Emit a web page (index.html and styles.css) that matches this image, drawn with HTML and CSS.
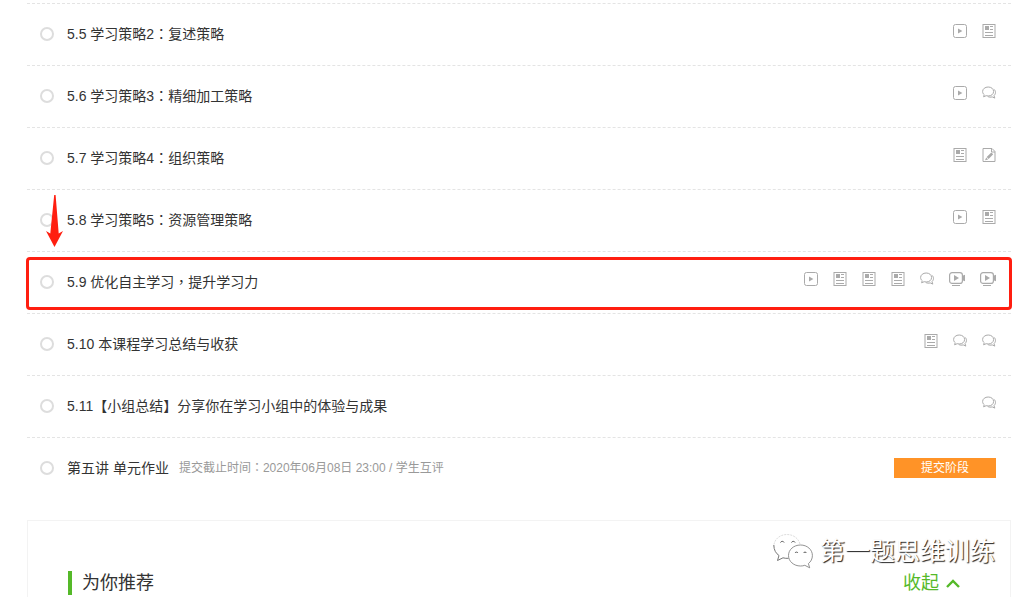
FILE: index.html
```html
<!DOCTYPE html>
<html lang="zh-CN">

<head>
    <meta charset="UTF-8">
    <meta name="viewport" content="width=device-width, initial-scale=1.0">
    <title>课程目录</title>
    <link rel="stylesheet" href="styles.css">
</head>

<body>
    <svg class="sprite" aria-hidden="true">
        <symbol id="icon-video" viewBox="0 0 14 14">
            <rect x="0.5" y="0.5" width="13" height="13" rx="2" fill="none" stroke="currentColor" />
            <path d="M5 4.4L9.4 7L5 9.6Z" fill="currentColor" />
        </symbol>
        <symbol id="icon-doc" viewBox="0 0 14 14">
            <rect x="1" y="0.5" width="12" height="13" fill="none" stroke="currentColor" />
            <rect x="3" y="2" width="4" height="4" fill="currentColor" />
            <path d="M8 2.5h3M8 5.5h3M3 8.500h8M3 11.500h8" fill="none" stroke="currentColor" />
        </symbol>
        <symbol id="icon-test" viewBox="0 0 14 14">
            <path d="M1 0.500h9l3 3v10H1zM9.500 0.500v3.500h3.500" fill="none" stroke="currentColor" />
            <path d="M9.300 4.400L11.200 6.300L6.600 10.900L4.700 9zM4.200 9.500L6.100 11.400L3 12.200z" fill="currentColor" />
        </symbol>
        <symbol id="icon-talk" viewBox="0 0 14 14">
            <path d="M6.200 1C9.300 1 11.600 2.900 11.600 5.500S9.300 10 6.200 10c-.7 0-1.400-.1-2-.3L1.600 10.800l.6-2.100C1.200 7.900.6 6.800.6 5.500.6 2.900 3.100 1 6.200 1z" fill="none" stroke="currentColor" />
            <path d="M11.900 3.200c1 .8 1.600 1.900 1.600 3.100 0 1.400-.6 2.500-1.500 3.300l.8 2.500-2.600-1.200c-1.600.4-3.200.3-4.400-.4" fill="none" stroke="currentColor" />
        </symbol>
        <symbol id="icon-live" viewBox="0 0 16 14">
            <rect x="0.600" y="0.600" width="12.800" height="10.800" rx="2.500" fill="none" stroke="currentColor" stroke-width="1.200" />
            <path d="M5 3L10 6L5 9Z" fill="currentColor" />
            <path d="M14 3.500l2-.8v6.600l-2-.8zM3 13h8v1H3z" fill="currentColor" />
        </symbol>
    </svg>

    <ul class="lessons">
        <li class="lesson">
            <span class="status"></span>
            <a class="name" href="#">5.5 学习策略2<span class="punct" lang="zh-TW">：</span>复述策略</a>
            <div class="icons">
                <a href="#" aria-label="视频"><svg class="icon"><use href="#icon-video" /></svg></a>
                <a href="#" aria-label="文档"><svg class="icon"><use href="#icon-doc" /></svg></a>
            </div>
        </li>
        <li class="lesson">
            <span class="status"></span>
            <a class="name" href="#">5.6 学习策略3<span class="punct" lang="zh-TW">：</span>精细加工策略</a>
            <div class="icons">
                <a href="#" aria-label="视频"><svg class="icon"><use href="#icon-video" /></svg></a>
                <a href="#" aria-label="讨论"><svg class="icon"><use href="#icon-talk" /></svg></a>
            </div>
        </li>
        <li class="lesson">
            <span class="status"></span>
            <a class="name" href="#">5.7 学习策略4<span class="punct" lang="zh-TW">：</span>组织策略</a>
            <div class="icons">
                <a href="#" aria-label="文档"><svg class="icon"><use href="#icon-doc" /></svg></a>
                <a href="#" aria-label="测验"><svg class="icon"><use href="#icon-test" /></svg></a>
            </div>
        </li>
        <li class="lesson">
            <span class="status"></span>
            <a class="name" href="#">5.8 学习策略5<span class="punct" lang="zh-TW">：</span>资源管理策略</a>
            <div class="icons">
                <a href="#" aria-label="视频"><svg class="icon"><use href="#icon-video" /></svg></a>
                <a href="#" aria-label="文档"><svg class="icon"><use href="#icon-doc" /></svg></a>
            </div>
            <svg class="arrow" viewBox="0 0 17 52" aria-hidden="true">
                <path d="M8.200 0H9.600L12.700 38.500L17 36L8.500 52L0 36L4.300 38.500Z" fill="#ff1e10" />
            </svg>
        </li>
        <li class="lesson marked">
            <span class="status"></span>
            <a class="name" href="#">5.9 优化自主学习<span class="punct" lang="zh-TW">，</span>提升学习力</a>
            <div class="icons">
                <a href="#" aria-label="视频"><svg class="icon"><use href="#icon-video" /></svg></a>
                <a href="#" aria-label="文档"><svg class="icon"><use href="#icon-doc" /></svg></a>
                <a href="#" aria-label="文档"><svg class="icon"><use href="#icon-doc" /></svg></a>
                <a href="#" aria-label="文档"><svg class="icon"><use href="#icon-doc" /></svg></a>
                <a href="#" aria-label="讨论"><svg class="icon"><use href="#icon-talk" /></svg></a>
                <a href="#" aria-label="直播"><svg class="icon wide"><use href="#icon-live" /></svg></a>
                <a href="#" aria-label="直播"><svg class="icon wide"><use href="#icon-live" /></svg></a>
            </div>
        </li>
        <li class="lesson">
            <span class="status"></span>
            <a class="name" href="#">5.10 本课程学习总结与收获</a>
            <div class="icons">
                <a href="#" aria-label="文档"><svg class="icon"><use href="#icon-doc" /></svg></a>
                <a href="#" aria-label="讨论"><svg class="icon"><use href="#icon-talk" /></svg></a>
                <a href="#" aria-label="讨论"><svg class="icon"><use href="#icon-talk" /></svg></a>
            </div>
        </li>
        <li class="lesson">
            <span class="status"></span>
            <a class="name" href="#">5.11【小组总结】分享你在学习小组中的体验与成果</a>
            <div class="icons">
                <a href="#" aria-label="讨论"><svg class="icon"><use href="#icon-talk" /></svg></a>
            </div>
        </li>
        <li class="lesson">
            <span class="status"></span>
            <a class="name" href="#">第五讲 单元作业</a>
            <span class="deadline">提交截止时间<span class="punct" lang="zh-TW">：</span>2020年06月08日 23:00 / 学生互评</span>
            <button class="submit" type="button">提交阶段</button>
        </li>
    </ul>

    <section class="recommend">
        <h2>为你推荐</h2>
        <button class="fold" type="button">收起
            <svg class="chevron" viewBox="0 0 14 9" aria-hidden="true">
                <path d="M1 8L7 2L13 8" fill="none" stroke="currentColor" stroke-width="2.400" />
            </svg>
        </button>
        <div class="watermark">
            <svg class="wechat" viewBox="0 0 40 36" aria-hidden="true">
                <path d="M27 11C25.500 5.500 20.500 1.500 14 1.500C6.500 1.500 .8 6.800 .8 13.500" fill="none" stroke="#ddd" stroke-dasharray="2 1" />
                <path d="M.8 12C.8 17 3 20.500 6 22.500L4.500 27.500L10 24.800C12 25.300 13.500 25.500 15.500 25.300" fill="none" stroke="#777" />
                <path d="M27.500 12C20.800 12 15.500 16.600 15.500 22.500S20.800 33 27.500 33c1.500 0 3-.2 4.300-.7l4.900 2.500-1.300-4.200c2.500-1.900 4-4.800 4-8.100C39.400 16.600 34.200 12 27.500 12z" fill="#fff" stroke="#777" stroke-width="0.800" />
                <path d="M7.500 9.500a2 2 0 0 1 3.600 0M18.500 9.500a2 2 0 0 1 3.600 0M22 20a1.700 1.700 0 0 1 3 0M30.500 20a1.700 1.700 0 0 1 3 0" fill="none" stroke="#555" />
            </svg>
            <span>第一题思维训练</span>
        </div>
    </section>
</body>

</html>
```

FILE: styles.css
```css
* {
    box-sizing: border-box;
}

body {
    margin: 0;
    padding: 3px 18px 0 27px;
    background-color: #fff;
    color: #333;
    font-family: "Liberation Sans", "Noto Sans CJK SC", sans-serif;
    font-size: 14px;
    line-height: 20px;
    overflow: hidden;
}

a {
    color: inherit;
    text-decoration: none;
}

button {
    border: 0;
    padding: 0;
    font-family: inherit;
    cursor: pointer;
}

.sprite {
    display: none;
}

/* full-width marks centred in their cell */
.punct {
    font-family: "Noto Sans CJK TC", sans-serif;
}

/* lesson list */
.lessons {
    margin: 0;
    padding: 0;
    list-style: none;
}

.lesson {
    position: relative;
    display: flex;
    align-items: center;
    height: 62px;
    padding: 0 15px 2px 13px;
    border-top: 1px dashed #e4e4e4;
}

.status {
    width: 14px;
    height: 14px;
    margin-right: 13px;
    border: 2px solid #ddd;
    border-radius: 50%;
}

.icons {
    display: flex;
    gap: 15px;
    margin-left: auto;
    padding-bottom: 6px;
    color: #aaa;
}

.icon {
    display: block;
    width: 14px;
    height: 14px;
}

.icon.wide {
    width: 16px;
}

.deadline {
    margin-left: 10px;
    color: #999;
    font-size: 12px;
}

.submit {
    width: 102px;
    height: 20px;
    margin-left: auto;
    background-color: #ff9327;
    color: #fff;
    font-size: 12px;
    line-height: 20px;
}

/* red box and arrow drawn over the list */
.marked::after {
    content: "";
    position: absolute;
    top: 5px;
    right: -1px;
    bottom: 3px;
    left: -1px;
    border: 3px solid #ff1e10;
    border-radius: 4px;
    pointer-events: none;
}

.arrow {
    position: absolute;
    top: 5px;
    left: 19px;
    width: 17px;
    height: 52px;
}

/* recommendations */
.recommend {
    position: relative;
    display: flex;
    align-items: center;
    justify-content: space-between;
    margin-top: 21px;
    padding: 50px 50px 24px 40px;
    border: 1px solid #f3f3f3;
}

.recommend h2 {
    margin: 0;
    padding-left: 10px;
    border-left: 4px solid #55b929;
    font-size: 18px;
    font-weight: normal;
    line-height: 24px;
}

.fold {
    display: flex;
    align-items: center;
    gap: 7px;
    background: none;
    color: #55b929;
    font-size: 18px;
    line-height: 24px;
}

.chevron {
    width: 14px;
    height: 9px;
}

.watermark {
    position: absolute;
    top: 12px;
    right: 15px;
    display: flex;
    align-items: center;
    gap: 7px;
    color: #fff;
    font-size: 25px;
    line-height: 32px;
    text-shadow: 1px 1px 1px #222;
}

.wechat {
    width: 40px;
    height: 36px;
}
```
